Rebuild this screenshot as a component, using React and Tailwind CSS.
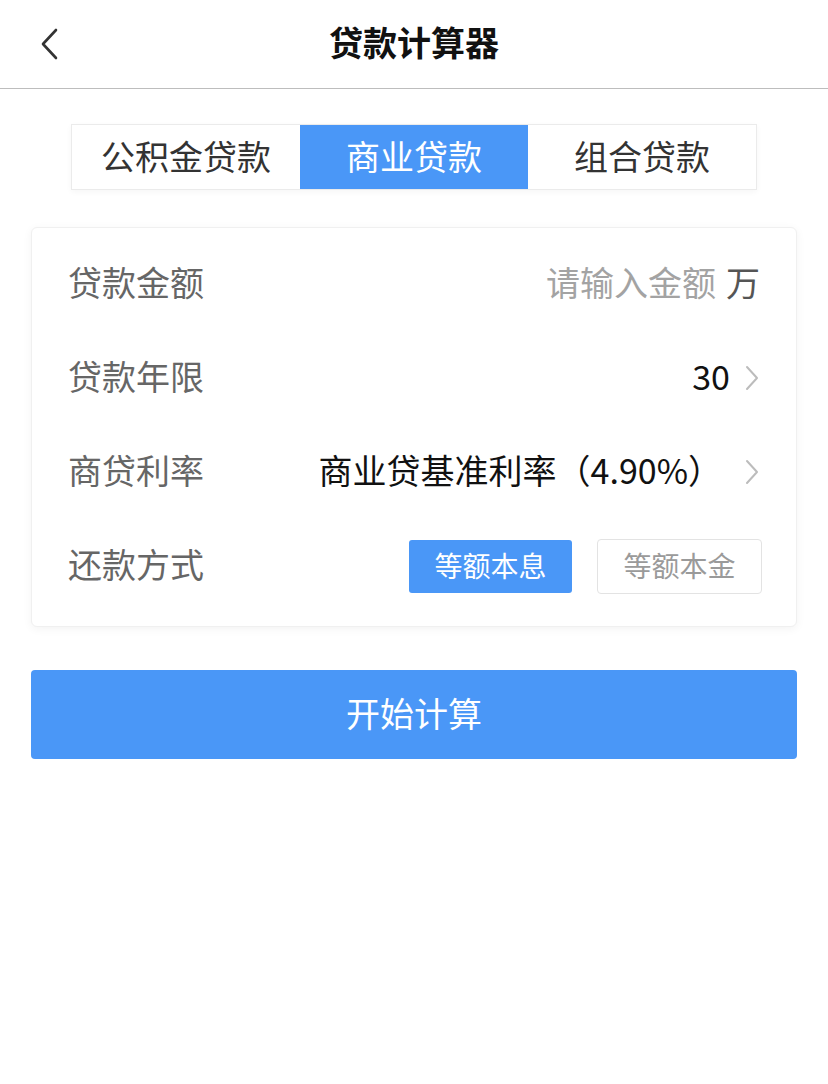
import React, { useState } from "react";

const FONT = { fontFamily: '"Noto Sans CJK SC", "Noto Sans", sans-serif' };

const TABS = ["公积金贷款", "商业贷款", "组合贷款"];

function Chevron({ className }) {
  return (
    <svg className={className} width="16" height="28" viewBox="0 0 16 28" fill="none" stroke="currentColor" strokeWidth="2" strokeLinecap="round" strokeLinejoin="round">
      <path d="M3 3l10 11-10 11" />
    </svg>
  );
}

function Row({ label, children }) {
  return (
    <div className="flex h-[94px] items-center justify-between">
      <span className="pb-[6px] text-[34px] text-[#666]">{label}</span>
      <div className="flex items-center">{children}</div>
    </div>
  );
}

export default function App() {
  const [tab, setTab] = useState(1);
  const [method, setMethod] = useState(0);

  return (
    <div className="min-h-[1084px] w-[828px] bg-white" style={FONT}>
      {/* header */}
      <div className="relative flex h-[89px] items-center justify-center border-b border-[#bdbdbd]">
        <button type="button" className="absolute left-[36px] top-[26px] text-[#333]">
          <svg width="26" height="36" viewBox="0 0 26 36" fill="none" stroke="currentColor" strokeWidth="2.6" strokeLinecap="round" strokeLinejoin="round">
            <path d="M20 4L7 18l13 14" />
          </svg>
        </button>
        <h1 className="pb-[5px] text-[34px] font-semibold text-[#111]">贷款计算器</h1>
      </div>

      {/* tabs */}
      <div className="mx-auto mt-[35px] flex h-[66px] w-[686px] border border-[#ebebeb] shadow-[0_2px_6px_rgba(0,0,0,0.04)]">
        {TABS.map((t, i) => (
          <button
            key={t}
            type="button"
            onClick={() => setTab(i)}
            className={
              i === tab
                ? "flex-1 bg-[#4a97f7] pb-[4px] text-[34px] text-white"
                : "flex-1 bg-white pb-[4px] text-[34px] text-[#333]"
            }
          >
            {t}
          </button>
        ))}
      </div>

      {/* form card */}
      <div className="mx-[31px] mt-[37px] rounded-[6px] border border-[#f0f0f0] bg-white px-[36px] pb-[13px] pt-[9px] shadow-[0_2px_10px_rgba(0,0,0,0.05)]">
        <Row label="贷款金额">
          <span className="pb-[6px] text-[34px] text-[#a3a3a3]">请输入金额</span>
          <span className="ml-[10px] pb-[6px] text-[34px] text-[#555]">万</span>
        </Row>
        <Row label="贷款年限">
          <span className="pb-[6px] text-[34px] text-[#111]">30</span>
          <Chevron className="ml-[14px] text-[#bcbcbc]" />
        </Row>
        <Row label="商贷利率">
          <span className="pb-[6px] text-[34px] text-[#111]">商业贷基准利率（4.90%）</span>
          <Chevron className="ml-[22px] text-[#bcbcbc]" />
        </Row>
        <Row label="还款方式">
          <button
            type="button"
            onClick={() => setMethod(0)}
            className={
              method === 0
                ? "h-[53px] w-[163px] rounded-[3px] bg-[#4a97f7] pb-[3px] text-[28px] text-white"
                : "h-[55px] w-[165px] rounded-[4px] border border-[#e3e3e3] bg-white pb-[3px] text-[28px] text-[#9a9a9a]"
            }
          >
            等额本息
          </button>
          <button
            type="button"
            onClick={() => setMethod(1)}
            className={
              method === 1
                ? "ml-[25px] mr-[-2px] h-[53px] w-[163px] rounded-[3px] bg-[#4a97f7] pb-[3px] text-[28px] text-white"
                : "ml-[25px] mr-[-2px] h-[55px] w-[165px] rounded-[4px] border border-[#e3e3e3] bg-white pb-[3px] text-[28px] text-[#9a9a9a]"
            }
          >
            等额本金
          </button>
        </Row>
      </div>

      {/* submit */}
      <button
        type="button"
        className="mx-[31px] mt-[43px] flex h-[89px] w-[766px] items-center justify-center rounded-[4px] bg-[#4a97f7] pb-[4px] text-[34px] text-white"
      >
        开始计算
      </button>
    </div>
  );
}
